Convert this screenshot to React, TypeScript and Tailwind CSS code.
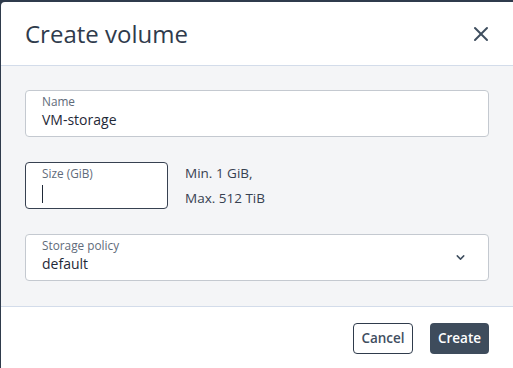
import { X, ChevronDown } from "lucide-react";

export default function App() {
  return (
    <div className="h-[368px] w-[513px] overflow-hidden bg-[#2f3b4c] pl-px pt-[2px] font-['Open_Sans',sans-serif]">
      <div className="flex h-full flex-col overflow-hidden rounded-tl-[4px] bg-white">
        <div className="flex h-[64px] shrink-0 items-center justify-between border-b border-[#d3dcea] pl-6 pr-[20px]">
          <h1 className="text-[24px] leading-none text-[#2f3b4c]">Create volume</h1>
          <button className="text-[#3f4e5f]">
            <X size={24} strokeWidth={2} />
          </button>
        </div>

        <div className="flex h-[240px] shrink-0 flex-col bg-[#f4f5f7] px-6 pt-[24px]">
          <div className="flex h-[47px] flex-col rounded-[4px] border border-[#c4c9d0] bg-white px-4 pt-[2px]">
            <span className="text-[11.8px] leading-[16px] text-[#5f6b7a]">Name</span>
            <span className="text-[14px] leading-[22px] text-[#1f2937]">VM-storage</span>
          </div>

          <div className="mt-[25px] flex h-[47px] items-start gap-[17px]">
            <div className="flex h-[47px] w-[143px] flex-col rounded-[4px] border border-[#374151] bg-white px-4 pt-[2px]">
              <span className="text-[11.8px] leading-[16px] text-[#5f6b7a]">Size (GiB)</span>
              <span className="mt-[4px] h-[18px] w-px bg-[#1f2937]" />
            </div>
            <div className="-mt-[1px] text-[13.5px] leading-[25px] text-[#374151]">
              <div>Min. 1 GiB,</div>
              <div>Max. 512 TiB</div>
            </div>
          </div>

          <div className="mt-[25px] flex h-[47px] items-center justify-between rounded-[4px] border border-[#c4c9d0] bg-white pl-4 pr-[21px]">
            <div className="flex flex-col self-start pt-[2px]">
              <span className="text-[11.8px] leading-[16px] text-[#5f6b7a]">Storage policy</span>
              <span className="text-[14px] leading-[22px] text-[#1f2937]">default</span>
            </div>
            <ChevronDown size={13} strokeWidth={2.75} className="text-[#3f4e5f]" />
          </div>
        </div>

        <div className="flex flex-1 items-start justify-end gap-[17px] border-t border-[#d3dcea] pr-6 pt-[16px]">
          <button className="h-[31px] w-[60px] rounded-[4px] border border-[#2f3b4c] bg-white text-[13.5px] font-semibold text-[#3f4e5f]">
            Cancel
          </button>
          <button className="h-[31px] w-[59px] rounded-[4px] bg-[#3e4c5c] text-[13.5px] font-semibold text-white">
            Create
          </button>
        </div>
      </div>
    </div>
  );
}
